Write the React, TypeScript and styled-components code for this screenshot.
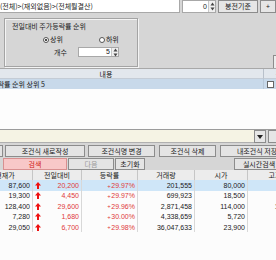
import React, { useLayoutEffect, useRef } from 'react';
import styled, { createGlobalStyle } from 'styled-components';

const GlobalStyle = createGlobalStyle`
  html, body { margin: 0; padding: 0; background: #fbfbfb; }
  body {
    font-family: "Noto Sans CJK KR", "Noto Sans", sans-serif;
    font-size: 7px;
    color: #1a1a1a;
  }
  * { box-sizing: border-box; }
`;

const Window = styled.div`
  width: 276px;
  height: 260px;
  overflow: hidden;
  background: #d6d6d6;
  display: flex;
  flex-direction: column;
`;

/* ---------- top bar ---------- */
const TopBar = styled.div`
  display: flex;
  align-items: flex-start;
  height: 14px;
  flex-shrink: 0;
`;

const PathField = styled.div`
  width: 184px;
  height: 13px;
  background: #fff;
  border-bottom: 1px solid #a8a8a8;
  border-right: 1px solid #a8a8a8;
  line-height: 12px;
  white-space: nowrap;
  overflow: hidden;
`;

const NumField = styled.div<{ $w: number; $ml: number; $h: number }>`
  display: flex;
  width: ${(p) => p.$w}px;
  height: ${(p) => p.$h}px;
  margin-left: ${(p) => p.$ml}px;
  background: #fff;
  border: 1px solid #a8a8a8;
  flex-shrink: 0;
`;

const NumValue = styled.span<{ $lh: number }>`
  flex: 1;
  text-align: right;
  padding-right: 1px;
  font-family: "Liberation Sans", sans-serif;
  line-height: ${(p) => p.$lh}px;
`;

const SpinBox = styled.div`
  width: 7px;
  display: flex;
  align-items: center;
  justify-content: center;
  background: #f0f0f0;
  border-left: 1px solid #c8c8c8;
`;

const Spin = () => (
  <SpinBox>
    <svg width="5" height="9" viewBox="0 0 5 9">
      <path d="M2.5 0.5 L4.5 3.5 L0.5 3.5 Z" fill="#444" />
      <path d="M0.5 5.5 L4.5 5.5 L2.5 8.5 Z" fill="#444" />
    </svg>
  </SpinBox>
);

const ToolButton = styled.button<{ $w: number; $ml: number }>`
  width: ${(p) => p.$w}px;
  height: 13px;
  margin-left: ${(p) => p.$ml}px;
  flex-shrink: 0;
  padding: 0;
  background: #e6e6e6;
  border: 1px solid #8c8c8c;
  font: inherit;
  font-size: 7px;
  line-height: 11px;
  color: #1a1a1a;
  white-space: nowrap;
`;

/* ---------- option panel ---------- */
const Panel = styled.div`
  display: flex;
  align-items: flex-start;
  height: 54px;
  flex-shrink: 0;
  overflow: hidden;
`;

const GroupBox = styled.div`
  margin: 4px 0 0 4px;
  width: 134px;
  height: 49px;
  border: 1px solid #a4a4a4;
  box-shadow: inset 1px 1px 0 #f4f4f4, 1px 1px 0 #f4f4f4;
  padding: 3px 0 0 7px;
  display: flex;
  flex-direction: column;
`;

const GroupTitle = styled.div`
  height: 9px;
  line-height: 9px;
  white-space: nowrap;
`;

const RadioRow = styled.div`
  display: flex;
  height: 9px;
  margin-top: 4px;
  padding-left: 31px;
  gap: 36px;
`;

const RadioItem = styled.label`
  display: flex;
  align-items: center;
  gap: 1px;
  line-height: 9px;
`;

const RadioDot = styled.span<{ $on: boolean }>`
  width: 6px;
  height: 6px;
  border-radius: 50%;
  border: 1px solid #555;
  background: #fff;
  display: flex;
  align-items: center;
  justify-content: center;
  &::after {
    content: '';
    width: 2px;
    height: 2px;
    border-radius: 50%;
    background: ${(p) => (p.$on ? '#111' : 'transparent')};
  }
`;

const CountRow = styled.div`
  display: flex;
  align-items: center;
  height: 10px;
  margin-top: 3px;
  padding-left: 42px;
`;

const CountLabel = styled.span`
  width: 24px;
  line-height: 10px;
`;

const RightStub = styled.div`
  margin: 41px 0 0 auto;
  width: 3px;
  height: 14px;
  border-left: 1px solid #8c8c8c;
  border-top: 1px solid #8c8c8c;
  background: #ececec;
  flex-shrink: 0;
`;

/* ---------- conditions list ---------- */
const ListView = styled.div`
  height: 61px;
  flex-shrink: 0;
  background: #fdfdfd;
  border-top: 1px solid #a8a8a8;
  overflow: hidden;
`;

const CondGrid = styled.div`
  display: grid;
  grid-template-columns: 315px 30px;
  width: 345px;
`;

const CondHead = styled.div<{ $last?: boolean }>`
  height: 10px;
  line-height: 10px;
  text-align: center;
  background: #e2e7ed;
  border-bottom: 1px solid #c4ccd6;
  border-right: ${(p) => (p.$last ? 'none' : '1px solid #b8c0ca')};
`;

const CondCell = styled.div`
  height: 10px;
  line-height: 10px;
  background: #c8d9ea;
  padding-left: 2px;
  white-space: nowrap;
  display: flex;
  align-items: center;
  border-right: 1px solid #b8c8d8;
`;

const CheckBox = styled.span`
  width: 7px;
  height: 7px;
  margin-left: 1px;
  background: #fff;
  border: 1px solid #666;
`;

/* ---------- combo ---------- */
const ComboRow = styled.div`
  display: flex;
  height: 14px;
  flex-shrink: 0;
  border-top: 1px solid #9c9c9c;
`;

const ComboField = styled.div`
  width: 256px;
  height: 13px;
  background: #f5f3e4;
  border-bottom: 1px solid #b0b0b0;
`;

const ComboArrow = styled.div`
  width: 12px;
  height: 13px;
  background: #e6e6e6;
  border: 1px solid #8c8c8c;
  display: flex;
  align-items: center;
  justify-content: center;
`;

const ComboExtra = styled.div`
  width: 8px;
  height: 13px;
  margin-left: 2px;
  background: #e6e6e6;
  border: 1px solid #8c8c8c;
  border-right: none;
`;

/* ---------- button rows ---------- */
const ButtonRow = styled.div<{ $mt: number }>`
  display: flex;
  height: 12px;
  margin-top: ${(p) => p.$mt}px;
  flex-shrink: 0;
`;

const RowButton = styled.button<{ $w: number; $ml: number; $tone?: 'hot' | 'dim' }>`
  width: ${(p) => p.$w}px;
  margin-left: ${(p) => p.$ml}px;
  height: 12px;
  flex-shrink: 0;
  padding: 0;
  font: inherit;
  font-size: 7px;
  line-height: 10px;
  white-space: nowrap;
  overflow: hidden;
  background: ${(p) => (p.$tone === 'hot' ? '#f8c8c8' : '#e4e4e4')};
  color: ${(p) => (p.$tone === 'hot' ? '#d01818' : p.$tone === 'dim' ? '#9a9a9a' : '#1a1a1a')};
  border: 1px solid ${(p) => (p.$tone === 'hot' ? '#d89090' : '#8c8c8c')};
`;

const Spacer = styled.div`
  flex: 1;
`;

/* ---------- result grid ---------- */
const ResultView = styled.div`
  flex: 1;
  background: #fcfcfc;
  overflow: hidden;
`;

const ResultGrid = styled.div`
  display: grid;
  grid-template-columns: 55px 49px 56px 57px 53px 55px;
  grid-auto-rows: 10.4px;
  width: 325px;
`;

const HeadCell = styled.div`
  height: 11px;
  line-height: 11px;
  text-align: center;
  background: #ececec;
  border-right: 1px solid #c6c6c6;
  border-bottom: 1px solid #c6c6c6;
`;

const DataCell = styled.div<{ $sel: boolean; $red?: boolean }>`
  display: flex;
  align-items: center;
  justify-content: flex-end;
  padding-right: 2px;
  font-family: "Liberation Sans", sans-serif;
  font-size: 7px;
  white-space: nowrap;
  background: ${(p) => (p.$sel ? '#cfe6f8' : 'transparent')};
  color: ${(p) => (p.$red ? '#e03a3a' : '#1a1a1a')};
  border-right: 1px solid #d8d8d8;
`;

const Arrow = styled.span`
  margin-right: auto;
  margin-left: 2px;
  display: flex;
`;

const Plus = styled.span`
  font-size: 6px;
  margin-right: 0.5px;
`;

const UpArrow = () => (
  <svg width="6" height="7" viewBox="0 0 6 7">
    <path d="M3 0 L6 3.4 L4 3.4 L4 7 L2 7 L2 3.4 L0 3.4 Z" fill="#ee1010" />
  </svg>
);

type Row = { cur: string; diff: string; rate: string; vol: string; open: string; high: string };

const rows: Row[] = [
  { cur: '87,600', diff: '20,200', rate: '29.97%', vol: '201,555', open: '80,000', high: '87,600' },
  { cur: '19,300', diff: '4,450', rate: '29.97%', vol: '699,923', open: '18,500', high: '19,300' },
  { cur: '128,400', diff: '29,600', rate: '29.96%', vol: '2,871,458', open: '114,000', high: '128,400' },
  { cur: '7,280', diff: '1,680', rate: '30.00%', vol: '4,338,659', open: '5,720', high: '7,280' },
  { cur: '29,050', diff: '6,700', rate: '29.98%', vol: '36,047,633', open: '23,900', high: '29,050' },
];

const useScroll = (x: number) => {
  const ref = useRef<HTMLDivElement>(null);
  useLayoutEffect(() => {
    if (ref.current) ref.current.scrollLeft = x;
  }, [x]);
  return ref;
};

export default function App() {
  const condRef = useScroll(51);
  const resRef = useScroll(22);

  return (
    <Window>
      <GlobalStyle />
      <TopBar>
        <PathField>(전체)&gt;(재외없음)&gt;(전체월결산)</PathField>
        <NumField $w={34} $ml={2} $h={13}>
          <NumValue $lh={11}>0</NumValue>
          <Spin />
        </NumField>
        <ToolButton $w={40} $ml={2}>봉전기준</ToolButton>
        <ToolButton $w={16} $ml={2}>+</ToolButton>
      </TopBar>

      <Panel>
        <GroupBox>
          <GroupTitle>전일대비 주가등락률 순위</GroupTitle>
          <RadioRow>
            <RadioItem>
              <RadioDot $on />
              상위
            </RadioItem>
            <RadioItem>
              <RadioDot $on={false} />
              하위
            </RadioItem>
          </RadioRow>
          <CountRow>
            <CountLabel>개수</CountLabel>
            <NumField $w={41} $ml={0} $h={10}>
              <NumValue $lh={8}>5</NumValue>
              <Spin />
            </NumField>
          </CountRow>
        </GroupBox>
        <RightStub />
      </Panel>

      <ListView ref={condRef}>
        <CondGrid>
          <CondHead>내용</CondHead>
          <CondHead $last>값</CondHead>
          <CondCell>전일대비 주가등락률 순위 상위 5</CondCell>
          <CondCell>
            <CheckBox />
          </CondCell>
        </CondGrid>
      </ListView>

      <ComboRow>
        <ComboField />
        <ComboArrow>
          <svg width="6" height="4" viewBox="0 0 6 4">
            <path d="M0 0 L6 0 L3 4 Z" fill="#222" />
          </svg>
        </ComboArrow>
        <ComboExtra />
      </ComboRow>

      <ButtonRow $mt={2}>
        <RowButton $w={3} $ml={0} style={{ borderLeft: 'none' }} />
        <RowButton $w={80} $ml={2}>조건식 새로작성</RowButton>
        <RowButton $w={67} $ml={3}>조건식명 변경</RowButton>
        <RowButton $w={57} $ml={4}>조건식 삭제</RowButton>
        <RowButton $w={74} $ml={4}>내조건식 저장</RowButton>
      </ButtonRow>

      <ButtonRow $mt={1}>
        <RowButton $w={64} $ml={3} $tone="hot">검색</RowButton>
        <RowButton $w={46} $ml={1} $tone="dim">다음</RowButton>
        <RowButton $w={30} $ml={1}>초기화</RowButton>
        <Spacer />
        <RowButton $w={50} $ml={0} style={{ marginRight: -8 }}>실시간검색</RowButton>
      </ButtonRow>

      <ResultView ref={resRef}>
        <ResultGrid>
          <HeadCell>현재가</HeadCell>
          <HeadCell>전일대비</HeadCell>
          <HeadCell>등락률</HeadCell>
          <HeadCell>거래량</HeadCell>
          <HeadCell>시가</HeadCell>
          <HeadCell>고가</HeadCell>
          {rows.map((r, i) => {
            const sel = i === 0;
            return (
              <React.Fragment key={r.cur}>
                <DataCell $sel={sel}>{r.cur}</DataCell>
                <DataCell $sel={sel} $red>
                  <Arrow>
                    <UpArrow />
                  </Arrow>
                  {r.diff}
                </DataCell>
                <DataCell $sel={sel} $red>
                  <Plus>+</Plus>
                  {r.rate}
                </DataCell>
                <DataCell $sel={sel}>{r.vol}</DataCell>
                <DataCell $sel={sel}>{r.open}</DataCell>
                <DataCell $sel={sel}>{r.high}</DataCell>
              </React.Fragment>
            );
          })}
        </ResultGrid>
      </ResultView>
    </Window>
  );
}
